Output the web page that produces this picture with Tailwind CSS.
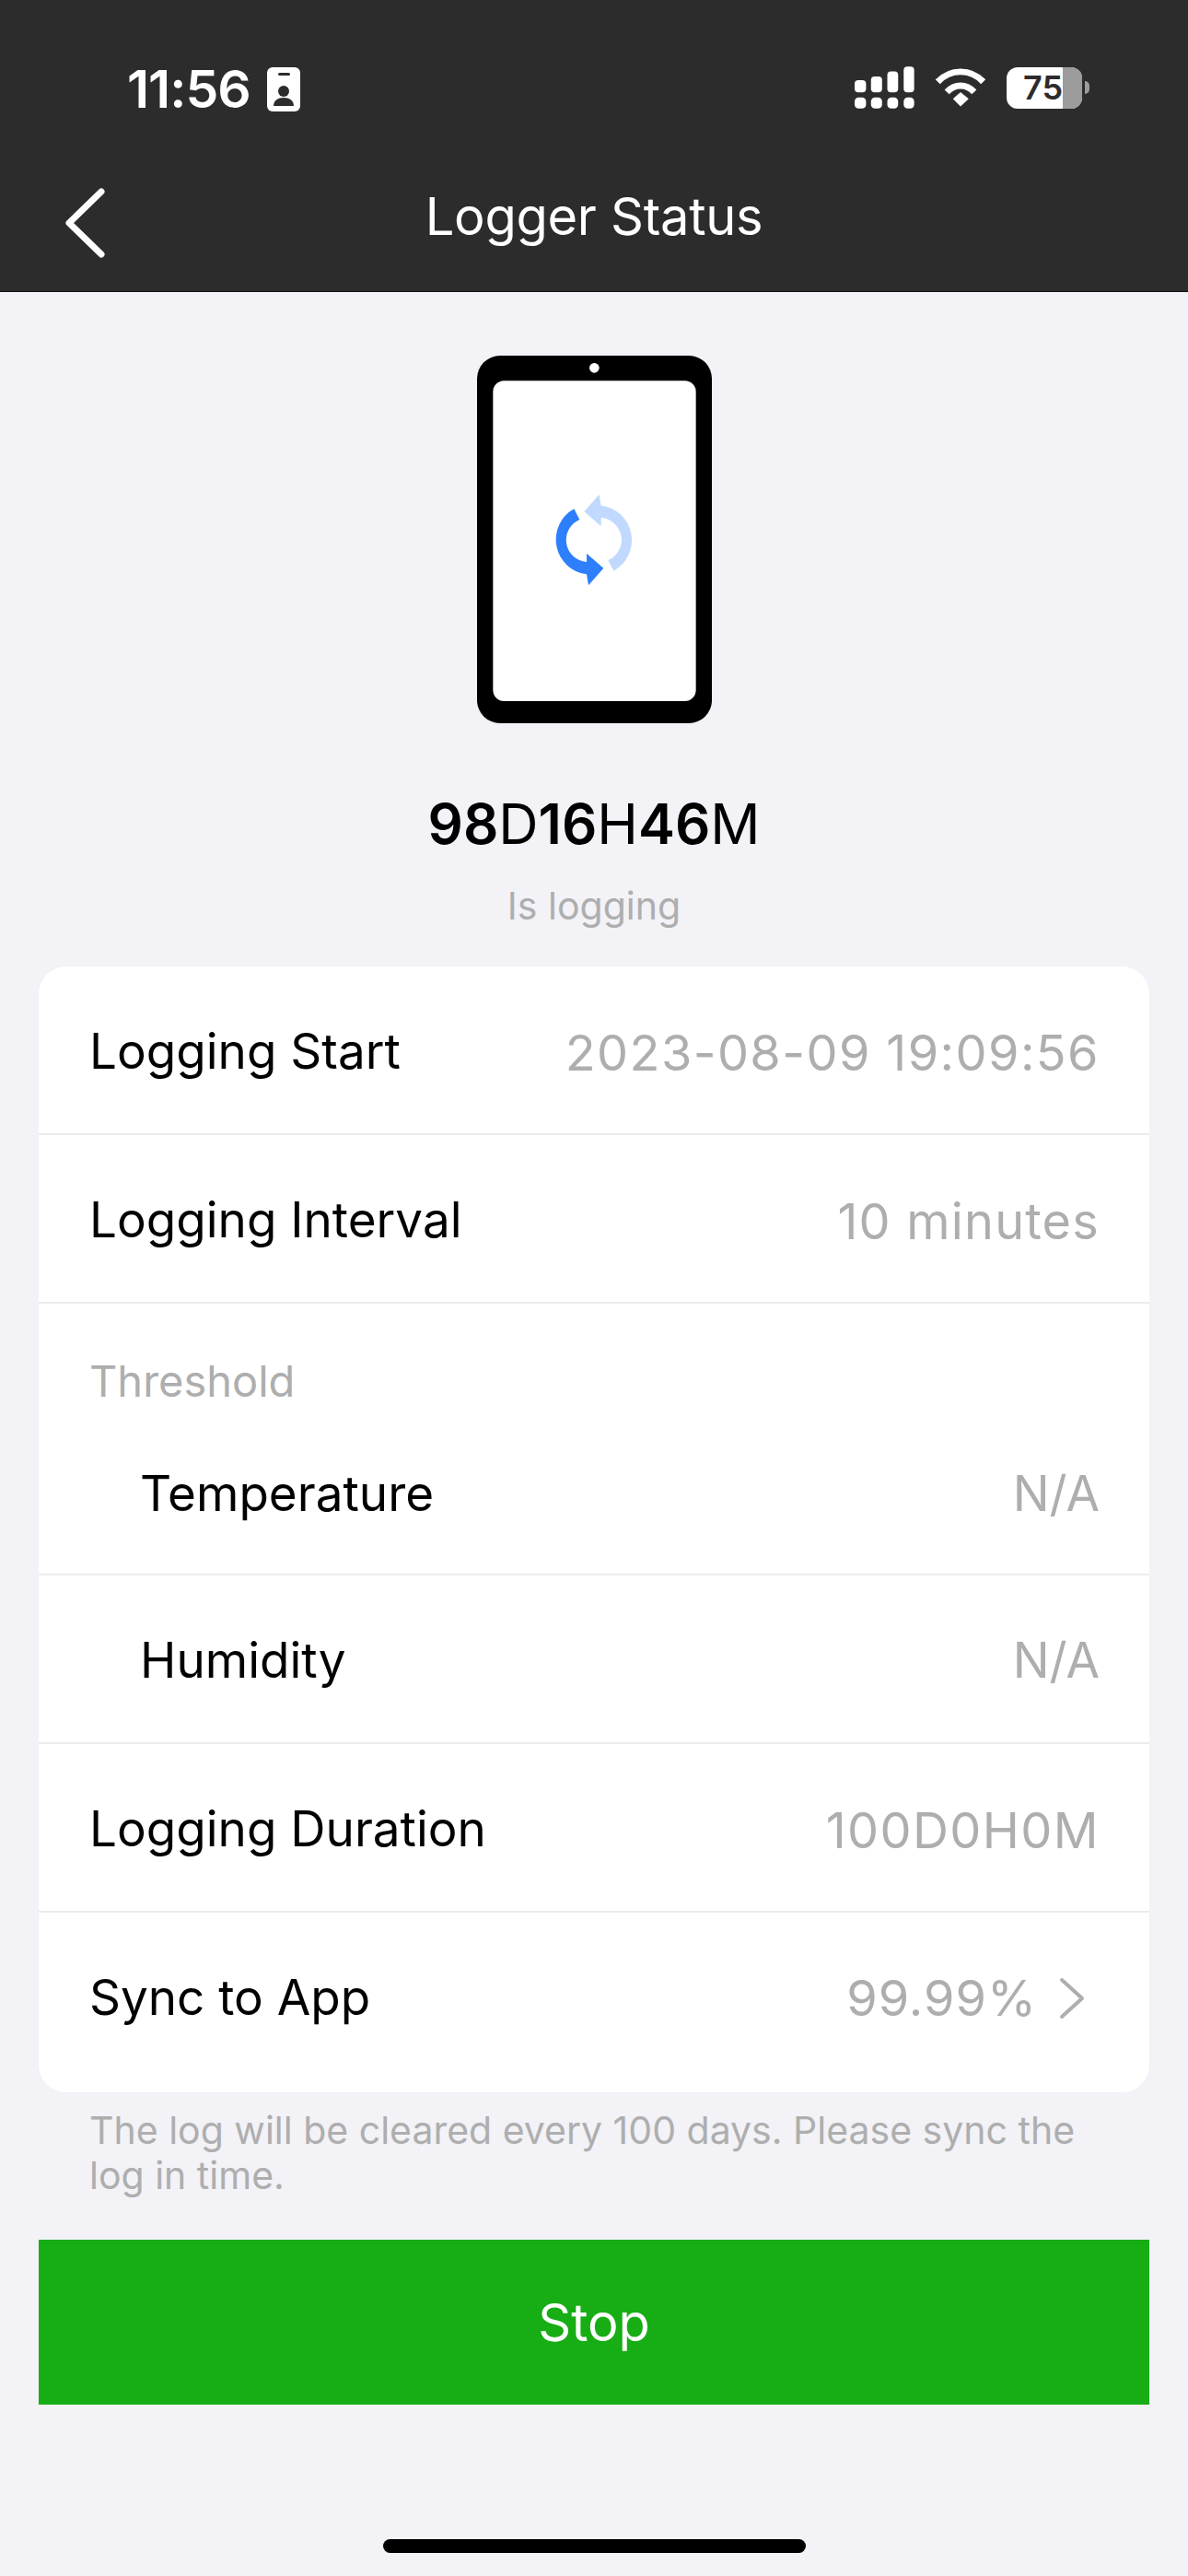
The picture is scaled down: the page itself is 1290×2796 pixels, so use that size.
<!DOCTYPE html>
<html lang="en">
<head>
  <meta charset="UTF-8" />
  <title>Logger Status</title>
  <meta name="viewport" content="width=device-width, initial-scale=1.0" />
  <script src="https://cdn.jsdelivr.net/npm/@tailwindcss/browser@4"></script>
</head>
<body class="bg-[#f2f2f7] font-['Inter',sans-serif] w-[1290px] h-[2796px] overflow-hidden relative">

  <!-- Status bar + nav -->
  <header class="bg-[#2c2c2c] h-[317px] border-b border-[#111] text-white flex flex-col">
    <div class="h-[190px] pt-[70px] pl-[138px] pr-[107px] flex justify-between items-start">
      <div class="flex items-center gap-[18px] h-[54px]">
        <span class="text-[57px] leading-[54px] font-semibold tracking-[-1px]">11:56</span>
        <svg width="36" height="48" viewBox="0 0 36 48">
          <rect width="36" height="48" rx="6" fill="#fff" />
          <rect x="12" y="6" width="13" height="3" rx="1.5" fill="#2c2c2c" />
          <circle cx="18" cy="26" r="6" fill="#2c2c2c" />
          <path d="M7 42c0-6 5-9 11-9s11 3 11 9z" fill="#2c2c2c" />
        </svg>
      </div>
      <div class="flex items-center gap-[22px] h-[50px]">
        <svg width="65" height="46" viewBox="225 68 194 136" fill="#fff">
          <rect x="225" y="112" width="37" height="40" rx="12" />
          <rect x="278" y="100" width="36" height="52" rx="12" />
          <rect x="331" y="84" width="35" height="68" rx="12" />
          <rect x="384" y="68" width="34" height="84" rx="12" />
          <rect x="225" y="168" width="37" height="36" rx="13" />
          <rect x="278" y="168" width="36" height="36" rx="13" />
          <rect x="331" y="168" width="35" height="36" rx="13" />
          <rect x="384" y="168" width="34" height="36" rx="13" />
        </svg>
        <svg width="56" height="42" viewBox="488 72 170 126" fill="none" stroke="#fff">
          <path d="M498 116C540 72 606 72 648 116" stroke-width="21" />
          <path d="M528 150C554 122 592 122 618 150" stroke-width="21" />
          <path d="M548 172L573 150L600 172L573 197Z" fill="#fff" stroke="none" />
        </svg>
        <div class="flex items-center">
          <div class="relative w-[82px] h-[45px] rounded-[12px] bg-white overflow-hidden flex items-center">
            <div class="absolute right-0 top-0 bottom-0 w-[21px] bg-[#9c9c9c]"></div>
            <span class="relative pl-[18px] text-[36px] leading-[45px] font-semibold text-[#2c2c2c]">75</span>
          </div>
          <div class="w-[5px] h-[14px] ml-[3px] rounded-r-full bg-[#9c9c9c]"></div>
        </div>
      </div>
    </div>
    <div class="relative h-[110px] flex items-center justify-center">
      <svg class="absolute left-[68px] top-[14px]" width="48" height="76" viewBox="0 0 48 76" fill="none" stroke="#fff" stroke-width="7" stroke-linecap="round" stroke-linejoin="round">
        <path d="M42 4L7 38L42 72" />
      </svg>
      <h1 class="text-[56px] leading-[60px] tracking-[-0.3px] pb-[20px]">Logger Status</h1>
    </div>
  </header>

  <main class="flex flex-col items-center">
    <!-- Device -->
    <svg class="mt-[69px]" width="255" height="399" viewBox="115 48 765 1197">
      <rect x="115" y="48" width="765" height="1197" rx="75" fill="#000" />
      <rect x="167" y="130" width="661" height="1043" rx="36" fill="#fff" />
      <circle cx="497" cy="88" r="16" fill="#fff" />
      <path d="M431 547L449 582A72 72 0 0 0 472 720L472 692L527 740L478 796L472 760A114 114 0 0 1 431 547Z" fill="#2d7ffb" />
      <path d="M431 547L449 582A72 72 0 0 0 472 720L472 692L527 740L478 796L472 760A114 114 0 0 1 431 547Z" fill="#c1d9fe" transform="rotate(180 495.5 648)" />
    </svg>

    <p class="mt-[73px] text-[60px] leading-[72px] text-black font-semibold">98<span class="font-normal">D</span>16<span class="font-normal">H</span>46<span class="font-normal">M</span></p>
    <p class="mt-[30px] text-[41px] leading-[46px] text-[#aeaeae]">Is logging</p>

    <!-- Details -->
    <section class="mt-[43px] w-[1206px] bg-white rounded-[30px] text-[53px] text-black divide-y-2 divide-[#ececec]">
      <div class="h-[183px] pt-[5px] pl-[55px] pr-[54px] flex justify-between items-center">
        <span>Logging Start</span><span class="text-[54px] tracking-[1.4px] text-[#aeaeae]">2023-08-09 19:09:56</span>
      </div>
      <div class="h-[183px] pt-[5px] pl-[55px] pr-[54px] flex justify-between items-center">
        <span>Logging Interval</span><span class="text-[54px] tracking-[1.2px] text-[#aeaeae]">10 minutes</span>
      </div>
      <div class="h-[295px] pl-[55px] pr-[54px] pt-[56px]">
        <p class="text-[47px] leading-[56px] text-[#aeaeae]">Threshold</p>
        <div class="mt-[62px] pl-[55px] leading-[64px] flex justify-between items-center">
          <span>Temperature</span><span class="text-[#aeaeae]">N/A</span>
        </div>
      </div>
      <div class="h-[183px] pt-[5px] pl-[110px] pr-[54px] flex justify-between items-center">
        <span>Humidity</span><span class="text-[#aeaeae]">N/A</span>
      </div>
      <div class="h-[183px] pt-[5px] pl-[55px] pr-[54px] flex justify-between items-center">
        <span>Logging Duration</span><span class="text-[54px] tracking-[1.4px] text-[#aeaeae]">100D0H0M</span>
      </div>
      <div class="h-[195px] pb-[10px] pl-[55px] pr-[54px] flex justify-between items-center">
        <span>Sync to App</span>
        <span class="flex items-center gap-[24px] text-[54px] tracking-[1px] text-[#aeaeae]">99.99%
          <svg class="mr-[16px]" width="28" height="46" viewBox="0 0 28 46" fill="none" stroke="#aeaeae" stroke-width="4" stroke-linecap="round" stroke-linejoin="round"><path d="M3 3L25 23L3 43" /></svg>
        </span>
      </div>
    </section>

    <p class="mt-[17px] w-[1206px] pl-[55px] pr-[56px] text-[41px] leading-[49px] text-[#aeaeae]">The log will be cleared every 100 days. Please sync the log in time.</p>

    <button class="mt-[45px] w-[1206px] h-[179px] bg-[#17ad14] text-white text-[56px]">Stop</button>
  </main>

  <div class="absolute left-[416px] bottom-[25px] w-[459px] h-[15px] rounded-full bg-black"></div>
</body>
</html>
